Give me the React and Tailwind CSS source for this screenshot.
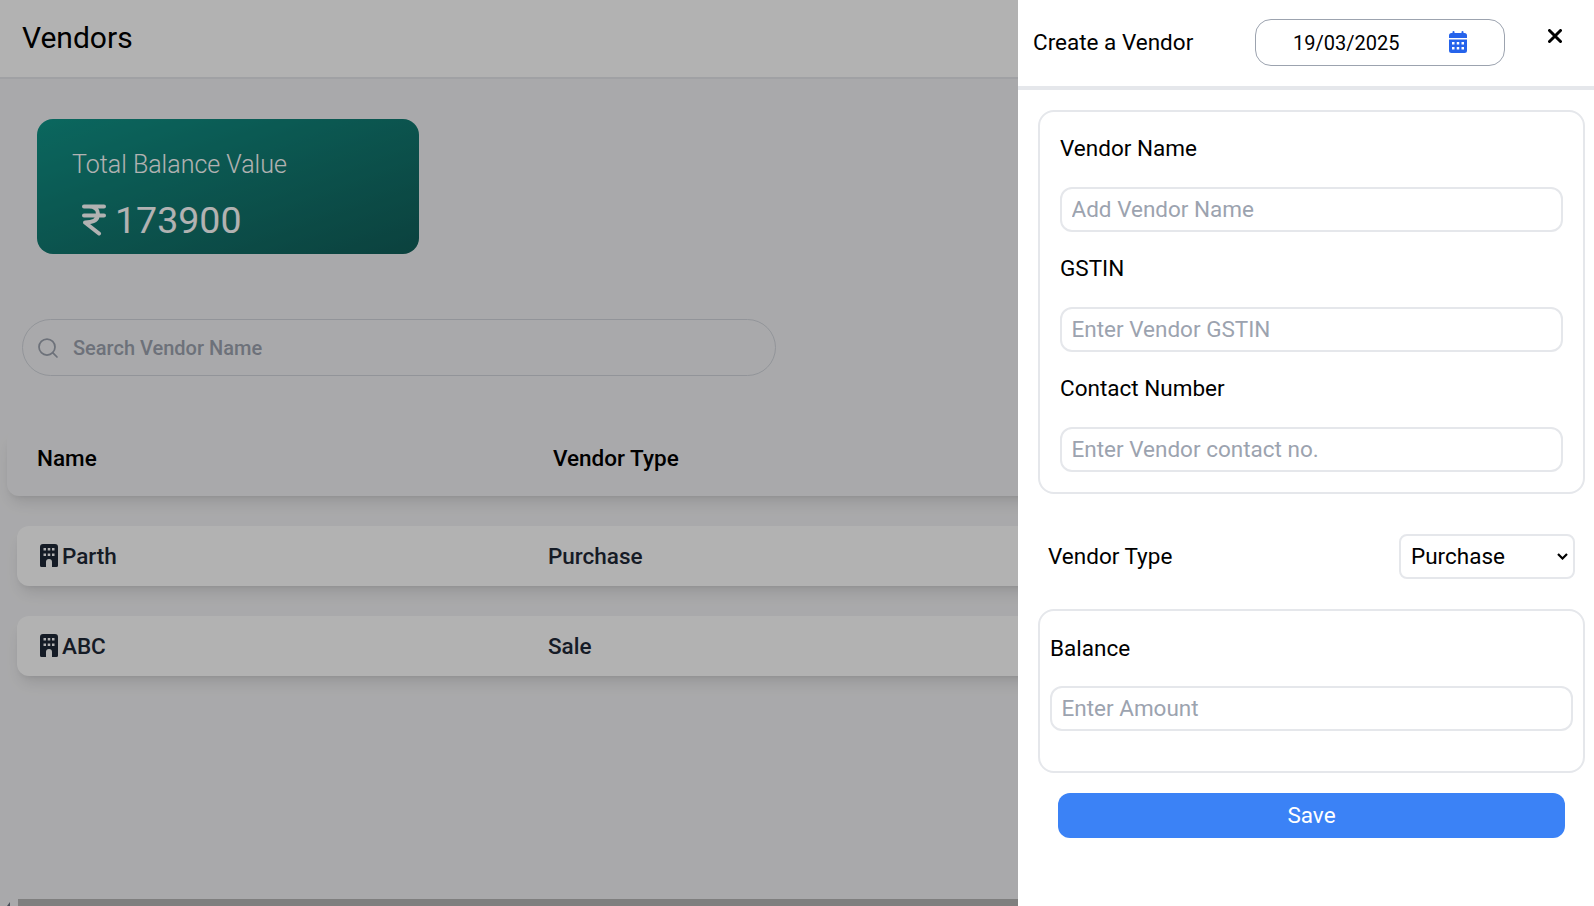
import { Search } from "lucide-react";

const vendors = [
  { name: "Parth", type: "Purchase" },
  { name: "ABC", type: "Sale" },
];

function BuildingIcon() {
  return (
    <svg viewBox="0 0 18 23" className="mb-[1px] h-[23px] w-[18px] shrink-0 fill-[#1f2937]" fillRule="evenodd">
      <path d="M3 0H15a3 3 0 0 1 3 3V21.5a1.5 1.5 0 0 1-1.5 1.5H12V18a3 3 0 0 0-6 0V23H1.5A1.5 1.5 0 0 1 0 21.5V3a3 3 0 0 1 3-3Z M3.5 4v2.5H6V4Z M7.75 4v2.5h2.5V4Z M12 4v2.5h2.5V4Z M3.5 9.5V12H6V9.5Z M7.75 9.5V12h2.5V9.5Z M12 9.5V12h2.5V9.5Z" />
    </svg>
  );
}

function CalendarIcon() {
  return (
    <svg viewBox="0 0 18 22" className="h-[22px] w-[18px] shrink-0 fill-[#2563eb]" fillRule="evenodd">
      <rect x="3.5" y="0" width="2" height="4" rx="1" />
      <rect x="12.5" y="0" width="2" height="4" rx="1" />
      <path d="M2.5 2H15.5A2.5 2.5 0 0 1 18 4.5V7H0V4.5A2.5 2.5 0 0 1 2.5 2Z" />
      <path d="M0 8.5H18V19.5A2.5 2.5 0 0 1 15.5 22H2.5A2.5 2.5 0 0 1 0 19.5Z M3 11v2.5h2.5V11Z M7.75 11v2.5h2.5V11Z M12.5 11v2.5H15V11Z M3 16v2.5h2.5V16Z M7.75 16v2.5h2.5V16Z M12.5 16v2.5H15V16Z" />
    </svg>
  );
}

function RupeeIcon() {
  return (
    <svg viewBox="0 0 24 32" className="h-[32px] w-[24px] shrink-0 fill-none stroke-white" strokeWidth="4" strokeLinecap="round" strokeLinejoin="round">
      <path d="M2 2.5H22 M2 11.5H22 M7 2.5C13 2.5 16 6 16 10C16 15 12 18.5 3 18.5L17 29.5" />
    </svg>
  );
}

function CloseIcon() {
  return (
    <svg viewBox="0 0 14 14" className="mb-[14px] ml-[43px] h-[14px] w-[14px] shrink-0 stroke-black" strokeWidth="3" strokeLinecap="round">
      <path d="M1.5 1.5L12.5 12.5 M12.5 1.5L1.5 12.5" />
    </svg>
  );
}

function VendorRow({ name, type }) {
  return (
    <div className="mx-[17px] flex h-[60px] w-[1560px] items-center rounded-xl bg-white pl-[23px] shadow-lg">
      <div className="flex w-[508px] items-center gap-[4px] text-[22.5px] font-medium text-[#1f2937]">
        <BuildingIcon />
        <span className="pt-[2px]">{name}</span>
      </div>
      <div className="pt-[2px] text-[22.5px] font-medium text-[#1f2937]">{type}</div>
    </div>
  );
}

function Field({ label, placeholder, className, inputGap = "mt-[19px]" }) {
  return (
    <div className={className}>
      <div className="flex h-[38px] items-center text-[22.5px] text-black">{label}</div>
      <input
        placeholder={placeholder}
        className={`${inputGap} h-[45px] w-full rounded-xl border-2 border-gray-200 px-[9.5px] pb-[2px] text-[22.5px] outline-none placeholder:text-[#9ca3af]`}
      />
    </div>
  );
}

export default function App() {
  return (
    <div className="relative flex h-screen flex-col overflow-hidden bg-[#f3f3f5] font-['Roboto',sans-serif]">
      <header className="flex h-[79px] shrink-0 items-center border-b-2 border-gray-200 bg-white pb-[3px] pl-[22px] text-[30px] text-black">
        Vendors
      </header>

      <main className="min-h-0 flex-1">
        <div className="ml-[37px] mt-[40px] flex h-[135px] w-[382px] flex-col rounded-2xl bg-gradient-to-br from-[#0f9488] to-[#115e59] pl-[35px] pt-[29px] text-white">
          <div className="text-[25px] font-light leading-[34px]">Total Balance Value</div>
          <div className="ml-[10px] mt-[13px] flex h-[50px] items-center gap-[9px] text-[37.5px]">
            <RupeeIcon />
            173900
          </div>
        </div>

        <div className="ml-[22px] mt-[65px] flex h-[57px] w-[754px] items-center rounded-full border border-gray-300 pl-[13px]">
          <Search className="h-[24px] w-[24px] text-[#9ca3af]" strokeWidth={1.75} />
          <span className="ml-[13px] text-[20px] font-medium text-[#9ca3af]">Search Vendor Name</span>
        </div>

        <div className="ml-[7px] mt-[53px] flex h-[67px] w-[1580px] items-center rounded-xl bg-[#f3f3f5] pb-[7px] pl-[30px] shadow-lg">
          <div className="w-[516px] text-[22.5px] font-medium text-black">Name</div>
          <div className="text-[22.5px] font-medium text-black">Vendor Type</div>
        </div>

        <div className="mt-[30px] flex flex-col gap-[30px]">
          {vendors.map((v) => (
            <VendorRow key={v.name} name={v.name} type={v.type} />
          ))}
        </div>
      </main>

      <div className="flex h-[7px] shrink-0">
        <div className="w-[18px] pl-[7px] pt-[3px]">
          <div className="h-0 w-0 border-b-[4px] border-l-[3px] border-b-[#6b7280] border-l-transparent" />
        </div>
        <div className="h-full w-[1400px] bg-[#b6b6b6]" />
      </div>

      {/* dim layer + drawer */}
      <div className="absolute inset-0 bg-black/30" />
      <aside className="absolute bottom-0 right-0 top-0 w-[576px] bg-white">
        <div className="flex h-[90px] items-center border-b-4 border-gray-200 pl-[15px]">
          <div className="w-[222px] text-[22.5px] text-black">Create a Vendor</div>
          <div className="mb-[2px] flex h-[47px] w-[250px] items-center rounded-2xl border border-[#9ca3af] pl-[37px]">
            <span className="w-[156px] pt-[2px] text-[20px] text-black">19/03/2025</span>
            <CalendarIcon />
          </div>
          <CloseIcon />
        </div>

        <div className="ml-[20px] mr-[9px] mt-[20px] h-[384px] rounded-2xl border-2 border-gray-200 px-[20px] pt-[18px]">
          <Field label="Vendor Name" placeholder="Add Vendor Name" />
          <Field label="GSTIN" placeholder="Enter Vendor GSTIN" className="mt-[18px]" />
          <Field label="Contact Number" placeholder="Enter Vendor contact no." className="mt-[18px]" />
        </div>

        <div className="ml-[30px] mr-[19px] mt-[40px] flex h-[45px] items-center justify-between">
          <span className="pt-[1px] text-[22.5px] text-black">Vendor Type</span>
          <div className="relative">
            <select className="h-[45px] w-[176px] appearance-none rounded-lg border-2 border-gray-200 bg-white pl-[10px] text-[22.5px] text-black outline-none">
              <option>Purchase</option>
              <option>Sale</option>
            </select>
            <svg viewBox="0 0 11 7" className="pointer-events-none absolute right-[7px] top-[19px] h-[7px] w-[11px] fill-none stroke-black" strokeWidth="2.2">
              <path d="M1 1L5.5 5.5L10 1" />
            </svg>
          </div>
        </div>

        <div className="ml-[20px] mr-[9px] mt-[30px] h-[164px] rounded-2xl border-2 border-gray-200 px-[10px] pt-[19px]">
          <Field label="Balance" placeholder="Enter Amount" inputGap="mt-[18px]" />
        </div>

        <button className="ml-[40px] mt-[20px] h-[45px] w-[507px] rounded-xl bg-[#3b82f6] text-[22.5px] text-white">
          Save
        </button>
      </aside>
    </div>
  );
}
